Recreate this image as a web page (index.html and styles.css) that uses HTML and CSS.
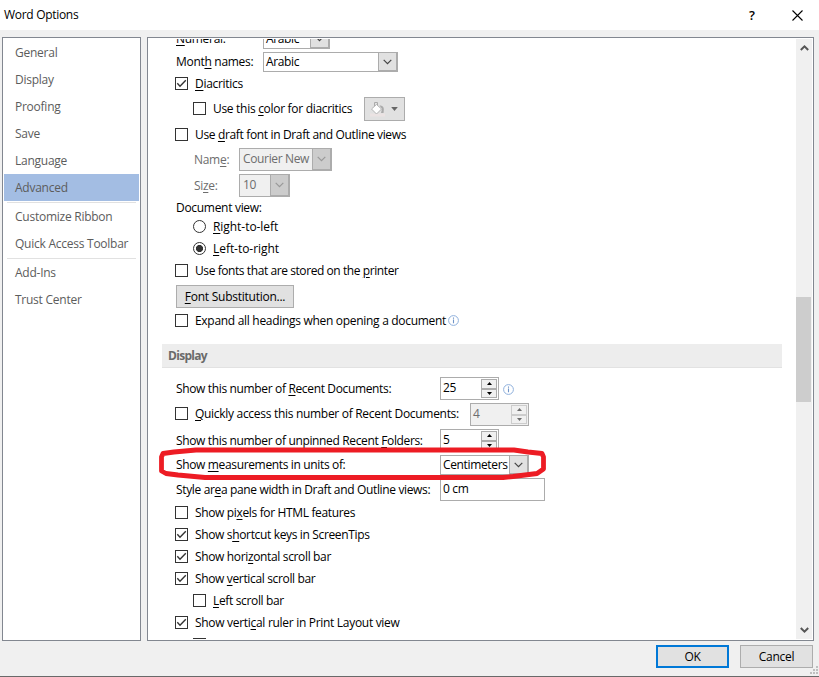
FILE: index.html
```html
<!DOCTYPE html>
<html lang="en">
<head>
<meta charset="utf-8">
<title>Word Options</title>
<link rel="stylesheet" href="styles.css">
</head>
<body>
<svg class="defs" aria-hidden="true">
  <symbol id="check" viewBox="0 0 13 13"><path d="M2.3 6.3 5 9.2 10.8 3.2" fill="none" stroke="#333" stroke-width="1.4"/></symbol>
  <symbol id="chev" viewBox="0 0 9 6"><path d="M.7.8 4.5 4.6 8.3.8" fill="none" stroke="currentColor" stroke-width="1.2"/></symbol>
  <symbol id="info" viewBox="0 0 11 11"><circle cx="5.5" cy="5.5" r="4.9" fill="#fff" stroke="#8fb0dc"/><path d="M5.5 4.6V8.2M5.5 2.6V3.7" stroke="#6f94c8" stroke-width="1.1"/></symbol>
  <symbol id="up" viewBox="0 0 5 3"><path d="M0 3 2.5 0 5 3z" fill="currentColor"/></symbol>
  <symbol id="down" viewBox="0 0 5 3"><path d="M0 0 2.5 3 5 0z" fill="currentColor"/></symbol>
</svg>
<div class="window">
  <header class="title">
    <span class="caption">Word Options</span>
    <span class="help">?</span>
    <svg class="close" viewBox="0 0 11 11"><path d="M.5.5l10 10M10.500.5l-10 10" fill="none" stroke="#000" stroke-width="1.1"/></svg>
  </header>
  <main class="main">
    <nav class="side">
      <a>General</a><a>Display</a><a>Proofing</a><a>Save</a><a>Language</a><a class="on">Advanced</a>
      <hr>
      <a>Customize Ribbon</a><a>Quick Access Toolbar</a>
      <hr>
      <a>Add-Ins</a><a>Trust Center</a>
    </nav>
    <section class="panel">
      <div class="content">
        <div class="row h22 first"><span class="lab loose w87"><u>N</u>umeral:</span><span class="combo c67"><b>Arabic</b><i><svg><use href="#chev"/></svg></i></span></div>
        <div class="row h24"><span class="lab loose w87">Mont<u>h</u> names:</span><span class="combo c135"><b>Arabic</b><i><svg><use href="#chev"/></svg></i></span></div>
        <div class="row h19"><span class="box"><svg><use href="#check"/></svg></span><span class="lab loose"><u>D</u>iacritics</span></div>
        <div class="row h31 in1"><span class="box"></span><span class="lab loose w151">Use this <u>c</u>olor for diacritics</span>
          <span class="paint"><svg class="bucket" viewBox="0 0 16 16"><path d="M0 12.500h15v3H0z" fill="#ebe3e3"/><path d="M4.500 6V1.500h3V6" fill="none" stroke="#aaa"/><path d="M6.500 3.500l5 4.500-5 5-5-5z" fill="#fff" stroke="#b4b4b4"/><path d="M9.500 4.500c4 0 5 2 4 7.500H11l1-4z" fill="#aaa"/></svg><svg class="tri"><use href="#down"/></svg></span></div>
        <div class="row h21"><span class="box"></span><span class="lab">Use <u>d</u>raft font in Draft and Outline views</span></div>
        <div class="row h29 in2 off"><span class="lab loose w45">Nam<u>e</u>:</span><span class="combo tall c93"><b>Courier New</b><i><svg><use href="#chev"/></svg></i></span></div>
        <div class="row h23 in2 off"><span class="lab loose w45">Si<u>z</u>e:</span><span class="combo tall c51"><b>10</b><i><svg><use href="#chev"/></svg></i></span></div>
        <div class="row h21"><span class="lab loose">Document view:</span></div>
        <div class="row h17 in1"><span class="box radio"></span><span class="lab wide"><u>R</u>ight-to-left</span></div>
        <div class="row h27 in1"><span class="box radio sel"></span><span class="lab wide"><u>L</u>eft-to-right</span></div>
        <div class="row h17"><span class="box"></span><span class="lab tight">Use fonts that are stored on the <u>p</u>rinter</span></div>
        <div class="row h35"><span class="btn sub"><span><u>F</u>ont Substitution...</span></span></div>
        <div class="row h13"><span class="box"></span><span class="lab loose">Expand all headin<u>g</u>s when opening a document</span><svg class="info"><use href="#info"/></svg></div>
        <h2>Display</h2>
        <div class="row f"><span class="lab w264">Show this number of <u>R</u>ecent Documents:</span><span class="spin"><b>25</b><em><i><svg><use href="#up"/></svg></i><i><svg><use href="#down"/></svg></i></em></span><svg class="info gap"><use href="#info"/></svg></div>
        <div class="row f"><span class="box lift"></span><span class="lab lift loose w275"><u>Q</u>uickly access this number of Recent Documents:</span><span class="spin dis"><b>4</b><em><i><svg><use href="#up"/></svg></i><i><svg><use href="#down"/></svg></i></em></span></div>
        <div class="row f"><span class="lab w264">Show this number of unpinned Recent <u>F</u>olders:</span><span class="spin"><b>5</b><em><i><svg><use href="#up"/></svg></i><i><svg><use href="#down"/></svg></i></em></span></div>
        <div class="row f short"><span class="lab w264">Show <u>m</u>easurements in units of:</span><span class="combo c89"><b>Centimeters</b><i><svg><use href="#chev"/></svg></i></span></div>
        <div class="row f"><span class="lab w264">Style ar<u>e</u>a pane width in Draft and Outline views:</span><span class="input">0 cm</span></div>
        <div class="checks">
          <div class="row"><span class="box"></span><span class="lab">Show pi<u>x</u>els for HTML features</span></div>
          <div class="row"><span class="box"><svg><use href="#check"/></svg></span><span class="lab">Show s<u>h</u>ortcut keys in ScreenTips</span></div>
          <div class="row"><span class="box"><svg><use href="#check"/></svg></span><span class="lab">Show hori<u>z</u>ontal scroll bar</span></div>
          <div class="row"><span class="box"><svg><use href="#check"/></svg></span><span class="lab">Show <u>v</u>ertical scroll bar</span></div>
          <div class="row in1"><span class="box"></span><span class="lab"><u>L</u>eft scroll bar</span></div>
          <div class="row"><span class="box"><svg><use href="#check"/></svg></span><span class="lab loose">Show verti<u>c</u>al ruler in Print Layout view</span></div>
          <div class="row in1"><span class="box"></span></div>
        </div>
      </div>
      <div class="scroll">
        <svg class="arrow" viewBox="0 0 9 6"><path d="M.8 5 4.500 1.400 8.200 5" fill="none" stroke="#555" stroke-width="2"/></svg>
        <div class="thumb"></div>
        <svg class="arrow" viewBox="0 0 9 6"><path d="M.8 1 4.500 4.600 8.200 1" fill="none" stroke="#555" stroke-width="2"/></svg>
      </div>
    </section>
  </main>
  <footer class="foot"><span class="btn ok">OK</span><span class="btn">Cancel</span></footer>
  <svg class="grip" viewBox="0 0 8 8"><path d="M6 0h2v2H6zM3 3h2v2H3zM6 3h2v2H6zM0 6h2v2H0zM3 6h2v2H3zM6 6h2v2H6z" fill="#bfbfbf"/></svg>
  <svg class="mark" viewBox="0 0 390 36"><path d="M3.500 24V10L5 6.500 16 5 38 3H356L370 5 384 6.500 385.500 10V22L379 26.500 355 29.500 345 30.500H47L20 28 8 26.500z" fill="none" stroke="#ed1c24" stroke-width="4.800" stroke-linejoin="round"/></svg>
</div>
</body>
</html>
```
FILE: styles.css
```css
* { box-sizing: border-box; }
body { margin: 0; font: 12px/16px "Open Sans", "Noto Sans", sans-serif; color: #000; letter-spacing: -0.35px; }
svg { display: block; }
.defs { position: absolute; width: 0; height: 0; }
.window { position: relative; display: flex; flex-direction: column; width: 819px; height: 677px; overflow: hidden; background: #f0f0f0; border-bottom: 1px solid #696969; }
.title { display: flex; align-items: center; height: 30px; padding: 0 16px 0 4px; background: #fff; }
.caption { flex: 1; letter-spacing: -0.3px; }
.help { width: 8px; margin-right: 35px; font-size: 13px; font-weight: 600; }
.close { width: 11px; height: 11px; }
.main { display: flex; gap: 6px; height: 611px; padding: 7px 5px 0 2px; }
.side { display: flex; flex-direction: column; width: 139px; height: 604px; padding: 1px; border: 1px solid #828790; background: #fff; color: #5c5c5c; }
.side a { height: 27px; padding-left: 11px; line-height: 27px; white-space: nowrap; letter-spacing: -0.25px; }
.side .on { background: #a3bde3; }
.side hr { width: 129px; height: 1px; margin: 1px 0 0 3px; border: 0; background: #e1e1e1; }
.panel { display: flex; width: 667px; height: 604px; padding: 1px; border: 1px solid #828790; background: #fff; }
.content { flex: 1; height: 600px; overflow: hidden; padding-left: 13px; }
.row { display: flex; align-items: center; padding-left: 12px; white-space: nowrap; }
.first { margin-top: -11px; }
.h13 { height: 13px; } .h17 { height: 17px; } .h19 { height: 19px; } .h21 { height: 21px; } .h22 { height: 22px; } .h23 { height: 23px; }
.h24 { height: 24px; } .h27 { height: 27px; } .h29 { height: 29px; } .h31 { height: 31px; } .h35 { height: 35px; }
.in1 { padding-left: 30px; }
.in2 { padding-left: 32px; }
.lab { flex: none; }
.loose { letter-spacing: -0.3px; }
.tight { letter-spacing: -0.42px; }
.wide { letter-spacing: -0.05px; }
.lift { margin-bottom: 2px; }
.box + .lab { margin-left: 7px; }
.w45 { width: 45px; } .w87 { width: 87px; } .w151 { width: 151px; } .w264 { width: 264px; } .w275 { width: 275px; }
u { text-decoration: underline; text-underline-offset: 2px; text-decoration-thickness: 1px; }
.box { flex: none; width: 13px; height: 13px; margin-left: 1px; border: 1px solid #333; background: #fff; }
.row > .lab:first-child, .row > .btn:first-child { margin-left: 2px; }
.in2 > .lab:first-child { margin-left: 0; }
.box svg { width: 13px; height: 13px; margin: -1px; }
.radio { border-radius: 50%; }
.sel { background: radial-gradient(circle, #333 0 3.200px, #fff 3.900px); }
.combo { display: flex; height: 20px; border: 1px solid #acacac; background: #fff; color: #000; }
.combo b { flex: 1; padding-left: 2px; font-weight: 400; line-height: 18px; }
.combo i { display: flex; align-items: center; justify-content: center; width: 19px; border: 1px solid #acacac; border-width: 0 1px 1px 1px; background: #e1e1e1; color: #444; }
.combo svg { width: 9px; height: 6px; }
.tall { height: 23px; }
.tall b { padding-left: 3px; line-height: 19px; }
.c51 { width: 51px; } .c67 { width: 67px; } .c89 { width: 89px; } .c93 { width: 93px; } .c135 { width: 135px; }
.off, .off .combo { color: #6d6d6d; }
.off .combo { background: #f0f0f0; }
.off .combo i { background: #ccc; color: #999; }
.paint { display: flex; align-items: center; width: 41px; height: 24px; margin-top: 1px; padding-left: 5px; border: 1px solid #acacac; background: #e1e1e1; color: #666; }
.bucket { width: 16px; height: 16px; }
.tri { width: 7px; height: 4px; margin-left: 5px; }
.btn { display: flex; align-items: center; justify-content: center; width: 73px; height: 23px; border: 1px solid #adadad; background: #e1e1e1; letter-spacing: -0.25px; }
.sub { width: 118px; }
.info { width: 11px; height: 11px; margin: 0 0 1px 2px; }
.gap { margin: 2px 0 0 4px; }
h2 { width: 620px; height: 24px; margin: 17px 0 9px; padding-left: 6px; border-bottom: 1px solid #e2e2e2; background: #ededed; color: #6a6a6a; font-size: 12px; line-height: 23px; font-weight: 700; letter-spacing: -0.7px; }
.f { height: 23px; margin-bottom: 3px; }
.short { height: 20px; }
.spin { display: flex; width: 59px; height: 23px; padding: 1px; border: 1px solid #acacac; background: #fff; }
.spin b { flex: 1; padding-left: 1px; font-weight: 400; line-height: 17px; }
.spin em { display: flex; flex-direction: column; width: 16px; height: 19px; color: #000; }
.spin i { display: flex; flex: 1; align-items: center; justify-content: center; border: 1px solid #acacac; background: #f0f0f0; }
.spin svg { width: 5px; height: 3px; }
.dis, .dis em { background: #f0f0f0; color: #6d6d6d; }
.dis i { border-color: #ccc; }
.input { width: 105px; height: 23px; padding-left: 2px; border: 1px solid #acacac; line-height: 19px; }
.checks { margin-top: -2px; }
.checks .row { height: 22px; padding-bottom: 1px; }
.scroll { display: flex; flex-direction: column; align-items: center; width: 16px; height: 600px; padding: 6px 0; background: #f0f0f0; }
.arrow { width: 9px; height: 6px; }
.thumb { width: 15px; height: 105px; margin: 246px 1px auto 0; background: #cdcdcd; }
.foot { display: flex; gap: 11px; justify-content: flex-end; padding: 4px 6px 0 0; }
.ok { border: 2px solid #0078d7; }
.grip { position: absolute; right: 1px; bottom: 2px; width: 8px; height: 8px; }
.mark { position: absolute; left: 158px; top: 447px; width: 390px; height: 36px; }
```
